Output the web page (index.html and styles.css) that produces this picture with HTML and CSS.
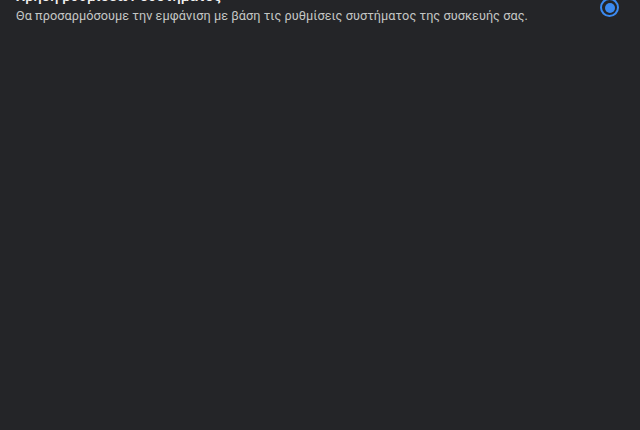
FILE: index.html
```html
<!DOCTYPE html>
<html lang="el">
<head>
  <meta charset="UTF-8" />
  <meta name="viewport" content="width=device-width, initial-scale=1" />
  <title>Εμφάνιση</title>
  <link rel="stylesheet" href="styles.css">
</head>
<body>

  <div class="option">
    <div class="option-text">
      <div class="option-title">Χρήση ρυθμίσεων συστήματος</div>
      <div class="option-desc">Θα προσαρμόσουμε την εμφάνιση με βάση τις ρυθμίσεις συστήματος της συσκευής σας.</div>
    </div>
    <span class="radio checked"></span>
  </div>

</body>
</html>
```

FILE: styles.css
```css
* {
  box-sizing: border-box;
}

html, body {
  height: 100%;
}

body {
  margin: 0;
  background: #242528;
  font-family: Roboto, 'Noto Sans', sans-serif;
  color: #e3e3e3;
  overflow: hidden;
}

.option {
  display: flex;
  align-items: flex-start;
  justify-content: space-between;
  margin-top: -13px;
  padding: 0 21px 0 16px;
}

.option-title {
  font-size: 14.5px;
  font-weight: 500;
  line-height: 20px;
  color: #f1f1f1;
  letter-spacing: 0.1px;
}

.option-desc {
  font-size: 12.7px;
  line-height: 18px;
  color: #c4c7c5;
  letter-spacing: 0.05px;
}

.radio {
  width: 19px;
  height: 19px;
  margin-top: 11px;
  border-radius: 50%;
  border: 2px solid #3b8af0;
  display: flex;
  align-items: center;
  justify-content: center;
}

.radio.checked::after {
  content: "";
  width: 10px;
  height: 10px;
  border-radius: 50%;
  background: #3b8af0;
}
```
